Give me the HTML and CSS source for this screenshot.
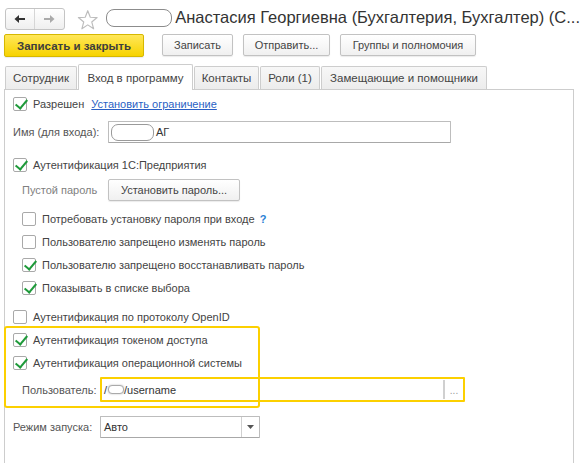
FILE: index.html
```html
<!DOCTYPE html>
<html lang="ru">
<head>
<meta charset="utf-8">
<title>Пользователь</title>
<link rel="stylesheet" href="styles.css">
</head>
<body>
<div class="window">
  <div class="header">
    <div class="nav">
      <span class="nav-btn">
        <svg width="12" height="10" viewBox="0 0 12 10"><path d="M11 5H3" stroke="#333" stroke-width="2"/><path d="M0.5 5L5 1V9Z" fill="#333"/></svg>
      </span>
      <span class="nav-btn">
        <svg width="12" height="10" viewBox="0 0 12 10"><path d="M1 5H9" stroke="#aaa" stroke-width="2"/><path d="M11.5 5L7 1V9Z" fill="#aaa"/></svg>
      </span>
    </div>
    <svg class="star" width="22" height="22" viewBox="0 0 22 22"><path d="M11 1.5L13.6 8.2L20.6 8.5L15.1 13L17 20L11 16L5 20L6.9 13L1.4 8.5L8.4 8.2Z" fill="none" stroke="#bdbdbd" stroke-width="1.2" stroke-linejoin="round"/></svg>
    <span class="redact title-redact"></span>
    <h1 class="title">Анастасия Георгиевна (Бухгалтерия, Бухгалтер) (С...</h1>
  </div>

  <div class="toolbar">
    <button class="btn btn-primary">Записать и закрыть</button>
    <button class="btn btn-save">Записать</button>
    <button class="btn">Отправить...</button>
    <button class="btn">Группы и полномочия</button>
  </div>

  <div class="tabs">
    <span class="tab tab-1">Сотрудник</span>
    <span class="tab tab-active">Вход в программу</span>
    <span class="tab tab-3">Контакты</span>
    <span class="tab tab-4">Роли (1)</span>
    <span class="tab tab-5">Замещающие и помощники</span>
  </div>

  <div class="panel">
    <div class="row row-check">
      <span class="cb checked"></span>
      <span class="cb-label">Разрешен</span>
      <a class="link" href="#">Установить ограничение</a>
    </div>

    <div class="row row-name">
      <span class="label label-name">Имя (для входа):</span>
      <div class="input input-name"><span class="redact name-redact"></span><span class="input-text">АГ</span></div>
    </div>

    <div class="row row-check row-auth">
      <span class="cb checked"></span>
      <span class="cb-label">Аутентификация 1С:Предприятия</span>
    </div>

    <div class="row row-pass sub">
      <span class="label label-pass">Пустой пароль</span>
      <button class="btn btn-pass">Установить пароль...</button>
    </div>

    <div class="group-sub">
      <div class="row row-check sub">
        <span class="cb"></span>
        <span class="cb-label">Потребовать установку пароля при входе</span>
        <span class="help">?</span>
      </div>
      <div class="row row-check sub">
        <span class="cb"></span>
        <span class="cb-label">Пользователю запрещено изменять пароль</span>
      </div>
      <div class="row row-check sub">
        <span class="cb checked"></span>
        <span class="cb-label">Пользователю запрещено восстанавливать пароль</span>
      </div>
      <div class="row row-check sub">
        <span class="cb checked"></span>
        <span class="cb-label">Показывать в списке выбора</span>
      </div>
    </div>

    <div class="row row-check row-openid">
      <span class="cb"></span>
      <span class="cb-label">Аутентификация по протоколу OpenID</span>
    </div>

    <div class="highlight-zone">
      <div class="highlight"></div>
      <div class="row row-check">
        <span class="cb checked"></span>
        <span class="cb-label">Аутентификация токеном доступа</span>
      </div>
      <div class="row row-check">
        <span class="cb checked"></span>
        <span class="cb-label">Аутентификация операционной системы</span>
      </div>
      <div class="row row-user sub">
        <span class="label label-user">Пользователь:</span>
        <div class="input input-user">
          <span class="input-text">/<span class="redact user-redact"></span>/username</span>
          <span class="dots">...</span>
        </div>
      </div>
    </div>

    <div class="row row-mode">
      <span class="label label-mode">Режим запуска:</span>
      <div class="input select">
        <span class="input-text">Авто</span>
        <span class="select-arrow"><svg width="7" height="4" viewBox="0 0 7 4"><path d="M0 0H7L3.5 4Z" fill="#555"/></svg></span>
      </div>
    </div>
  </div>
</div>
</body>
</html>
```
FILE: styles.css
```css
* { box-sizing: border-box; }
html, body { margin: 0; padding: 0; background: #fff; }
body {
  font-family: "Liberation Sans", Arial, sans-serif;
  font-size: 11px;
  color: #444;
  width: 580px;
  height: 463px;
  overflow: hidden;
}

/* header */
.header {
  display: flex;
  align-items: center;
  height: 33px;
  padding: 5px 0 0 5px;
}
.nav {
  display: flex;
  width: 61px;
  height: 22px;
  border: 1px solid #c4c4c4;
  border-radius: 3px;
  background: linear-gradient(#fff, #efefef);
}
.nav-btn {
  flex: 1;
  display: flex;
  align-items: center;
  justify-content: center;
}
.nav-btn + .nav-btn { border-left: 1px solid #d6d6d6; }
.star { margin-left: 12px; margin-top: 1px; }
.redact {
  display: inline-block;
  background: #fff;
  border: 1px solid #8c8c8c;
  border-radius: 8px;
}
.title-redact {
  width: 66px;
  height: 18px;
  margin-left: 8px;
  margin-top: -3px;
  flex-shrink: 0;
}
.title {
  margin: -4px 0 0 3px;
  font-size: 16.5px;
  font-weight: normal;
  color: #333;
  white-space: nowrap;
}

/* toolbar */
.toolbar {
  display: flex;
  align-items: flex-start;
  padding: 1px 0 0 4px;
  height: 31px;
}
.btn {
  font-family: "Liberation Sans", Arial, sans-serif;
  font-size: 11px;
  color: #444;
  height: 22px;
  padding: 0;
  border: 1px solid #c2c2c2;
  border-radius: 2px;
  background: linear-gradient(#fff, #f0f0f0);
  box-shadow: 0 1px 1px rgba(0,0,0,0.08);
  margin-left: 10px;
}
.btn-primary {
  margin-left: 0;
  width: 140px;
  height: 23px;
  font-size: 11.5px;
  font-weight: bold;
  color: #3d3d3d;
  border: 1px solid #d6b800;
  background: linear-gradient(#ffe75a, #f7d300);
}
.btn-save { margin-left: 18px; width: 71px; }
.toolbar .btn:nth-child(3) { width: 87px; }
.toolbar .btn:nth-child(4) { width: 136px; }

/* tabs */
.tabs {
  display: flex;
  align-items: flex-end;
  gap: 1px;
  padding-left: 5px;
  height: 25px;
  position: relative;
  z-index: 1;
}
.tab {
  height: 23px;
  display: flex;
  align-items: center;
  justify-content: center;
  font-size: 11.5px;
  color: #444;
  border: 1px solid #cdcdcd;
  border-bottom: none;
  border-radius: 2px 2px 0 0;
  background: linear-gradient(#f7f7f7, #ececec);
}
.tab-1 { width: 72px; }
.tab-active {
  width: 115px;
  height: 26px;
  background: #fff;
  margin-bottom: -1px;
}
.tab-3 { width: 65px; }
.tab-4 { width: 60px; }
.tab-5 { width: 166px; }

/* panel */
.panel {
  margin-left: 4px;
  width: 570px;
  height: 380px;
  border: 1px solid #cdcdcd;
  border-bottom: none;
  padding: 2px 0 0 8px;
  display: flex;
  flex-direction: column;
}
.row {
  display: flex;
  align-items: center;
  flex-shrink: 0;
}
.row-check { height: 23px; }
.row.sub { padding-left: 9px; }
.cb {
  width: 14px;
  height: 14px;
  border: 1px solid #a9a9a9;
  border-radius: 2px;
  background: #fff;
  position: relative;
  flex-shrink: 0;
}
.cb.checked::after {
  content: "";
  position: absolute;
  left: 3.5px;
  top: -1px;
  width: 5px;
  height: 10px;
  border: solid #1e9a3a;
  border-width: 0 2.5px 2.5px 0;
  transform: rotate(40deg);
}
.cb-label { margin-left: 6px; color: #444; white-space: nowrap; }
.link { margin-left: 7px; color: #2a5fc4; text-decoration: underline; }
.help { margin-left: 5px; color: #2a7fd4; font-weight: bold; }

.label { color: #555; white-space: nowrap; flex-shrink: 0; }
.label-name { width: 95px; }
.label-pass { width: 86px; color: #808080; }
.label-user { width: 78px; }
.label-mode { width: 87px; }

.input {
  display: flex;
  align-items: center;
  border: 1px solid #bdbdbd;
  border-bottom-color: #a8a8a8;
  border-radius: 1px;
  background: #fff;
  color: #333;
}
.input-text { white-space: nowrap; display: flex; align-items: center; }

.row-name { margin-top: 6px; height: 22px; }
.input-name { width: 343px; height: 22px; padding-left: 2px; }
.name-redact { width: 43px; height: 17px; border-radius: 7px; border-color: #9a9a9a; flex-shrink: 0; }
.input-name .input-text { margin-left: 2px; }

.row-auth { margin-top: 10px; }
.row-pass { margin-top: 3px; height: 22px; }
.btn-pass { margin-left: 0; width: 132px; height: 22px; }

.group-sub { margin-top: 6px; display: flex; flex-direction: column; }
.row-openid { margin-top: 6px; }

.highlight-zone { position: relative; display: flex; flex-direction: column; }
.highlight {
  position: absolute;
  left: -9px;
  top: -2px;
  width: 256px;
  height: 82px;
  border: 2px solid #fcd000;
  border-radius: 3px;
  pointer-events: none;
}
.row-user { margin-top: 3px; height: 25px; }
.input-user {
  width: 365px;
  height: 25px;
  border: 2px solid #fcd000;
  padding-left: 2px;
  justify-content: space-between;
}
.user-redact { width: 16px; height: 9px; border-radius: 4px; border-color: #aaa; margin: 0 0 0 1px; box-shadow: 0 0 2px #bbb; }
.dots {
  width: 20px;
  height: 19px;
  border-left: 2px solid #d0d0d0;
  color: #999;
  font-size: 10px;
  display: flex;
  align-items: center;
  justify-content: center;
  padding-top: 2px;
}

.row-mode { margin-top: 14px; height: 22px; }
.select { width: 160px; height: 22px; padding-left: 3px; justify-content: space-between; }
.select-arrow {
  width: 18px;
  height: 20px;
  border-left: 1px solid #d0d0d0;
  display: flex;
  align-items: center;
  justify-content: center;
}
```
